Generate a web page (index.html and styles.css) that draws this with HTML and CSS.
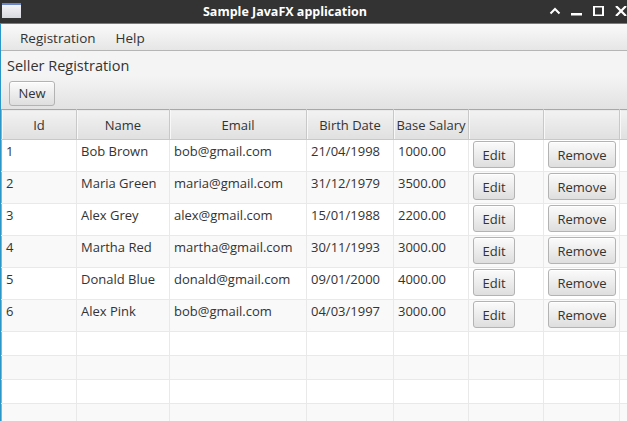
FILE: index.html
```html
<!DOCTYPE html>
<html>
<head>
<meta charset="utf-8">
<link rel="stylesheet" href="styles.css">
</head>
<body>
<div class="titlebar">
  <div class="appicon"></div>
  <div class="title">Sample JavaFX application</div>
  <div class="controls">
    <svg width="12" height="10" viewBox="0 0 12 10"><path d="M1.5 7.5 L6 3 L10.5 7.5" fill="none" stroke="#fff" stroke-width="2"/></svg>
    <svg width="12" height="10" viewBox="0 0 12 10"><rect x="0" y="7" width="11" height="2.5" fill="#fff"/></svg>
    <svg width="12" height="10" viewBox="0 0 12 10"><rect x="1" y="0.5" width="9" height="9" fill="none" stroke="#fff" stroke-width="2"/></svg>
    <svg width="12" height="10" viewBox="0 0 12 10"><path d="M1 0 L11 10 M11 0 L1 10" fill="none" stroke="#fff" stroke-width="2.2"/></svg>
  </div>
</div>
<div class="window">
  <div class="menubar">
    <span class="menu">Registration</span>
    <span class="menu">Help</span>
  </div>
  <div class="heading">Seller Registration</div>
  <div class="toolbar"><button class="btn btn-new">New</button></div>
  <table class="grid">
    <colgroup>
      <col class="c-id"><col class="c-name"><col class="c-email"><col class="c-date"><col class="c-sal"><col class="c-edit"><col class="c-rem"><col class="c-fill">
    </colgroup>
    <thead>
      <tr><th>Id</th><th>Name</th><th>Email</th><th>Birth Date</th><th>Base Salary</th><th></th><th></th><th></th></tr>
    </thead>
    <tbody>
      <tr><td>1</td><td>Bob Brown</td><td>bob@gmail.com</td><td>21/04/1998</td><td>1000.00</td><td class="b"><button class="btn btn-edit">Edit</button></td><td class="b"><button class="btn btn-rem">Remove</button></td><td></td></tr>
      <tr><td>2</td><td>Maria Green</td><td>maria@gmail.com</td><td>31/12/1979</td><td>3500.00</td><td class="b"><button class="btn btn-edit">Edit</button></td><td class="b"><button class="btn btn-rem">Remove</button></td><td></td></tr>
      <tr><td>3</td><td>Alex Grey</td><td>alex@gmail.com</td><td>15/01/1988</td><td>2200.00</td><td class="b"><button class="btn btn-edit">Edit</button></td><td class="b"><button class="btn btn-rem">Remove</button></td><td></td></tr>
      <tr><td>4</td><td>Martha Red</td><td>martha@gmail.com</td><td>30/11/1993</td><td>3000.00</td><td class="b"><button class="btn btn-edit">Edit</button></td><td class="b"><button class="btn btn-rem">Remove</button></td><td></td></tr>
      <tr><td>5</td><td>Donald Blue</td><td>donald@gmail.com</td><td>09/01/2000</td><td>4000.00</td><td class="b"><button class="btn btn-edit">Edit</button></td><td class="b"><button class="btn btn-rem">Remove</button></td><td></td></tr>
      <tr><td>6</td><td>Alex Pink</td><td>bob@gmail.com</td><td>04/03/1997</td><td>3000.00</td><td class="b"><button class="btn btn-edit">Edit</button></td><td class="b"><button class="btn btn-rem">Remove</button></td><td></td></tr>
      <tr class="empty"><td></td><td></td><td></td><td></td><td></td><td></td><td></td><td></td></tr>
      <tr class="empty"><td></td><td></td><td></td><td></td><td></td><td></td><td></td><td></td></tr>
      <tr class="empty"><td></td><td></td><td></td><td></td><td></td><td></td><td></td><td></td></tr>
      <tr class="empty"><td></td><td></td><td></td><td></td><td></td><td></td><td></td><td></td></tr>
    </tbody>
  </table>
</div>
</body>
</html>
```
FILE: styles.css
```css
html, body {
  margin: 0;
  padding: 0;
}
body {
  width: 627px;
  height: 421px;
  overflow: hidden;
  background: #f4f4f4;
  font-family: "Open Sans", "Noto Sans", sans-serif;
  font-size: 13px;
  color: #333333;
}
.titlebar {
  height: 23px;
  background: #333333;
  border-bottom: 1px solid #2b97c9;
  display: flex;
  align-items: center;
  position: relative;
}
.appicon {
  width: 19px;
  height: 13px;
  margin-left: 2px;
  margin-top: -3px;
  background: linear-gradient(#f4f4f6, #d8d8e0);
  border-top: 2px solid #6b86c8;
  box-sizing: content-box;
}
.title {
  flex: 1;
  text-align: center;
  color: #ffffff;
  font-weight: bold;
  font-size: 12.5px;
  margin-left: -18px;
  margin-right: 60px;
}
.controls {
  position: absolute;
  right: 0;
  top: 6px;
  display: flex;
  gap: 10px;
}
.window {
  border-left: 1px solid #2b97c9;
  height: 397px;
  overflow: hidden;
}
.menubar {
  background: linear-gradient(#fafafa, #e6e6e6);
  border-bottom: 1px solid #b5b5b5;
  display: flex;
  align-items: center;
  padding-left: 19px;
  padding-top: 2px;
  box-sizing: border-box;
  height: 27px;
  gap: 20px;
  font-size: 13.5px;
}
.heading {
  height: 25px;
  line-height: 25px;
  padding-left: 6px;
  padding-top: 2px;
  box-sizing: border-box;
  font-size: 14.5px;
  background: #f4f4f4;
}
.toolbar {
  height: 33px;
  background: linear-gradient(#f4f4f4, #e2e2e2);
  display: flex;
  align-items: center;
  padding-left: 8px;
  padding-top: 1px;
  box-sizing: border-box;
}
.btn {
  font-family: "Open Sans", "Noto Sans", sans-serif;
  font-size: 13px;
  color: #333333;
  background: linear-gradient(#fbfbfb, #dedede);
  border: 1px solid #b3b3b3;
  border-radius: 3px;
  box-shadow: inset 0 1px 0 #ffffff;
  padding: 0;
  margin: 0;
}
.btn-new {
  width: 46px;
  height: 25px;
}
.btn-edit {
  width: 42px;
  height: 27px;
}
.btn-rem {
  width: 68px;
  height: 27px;
}
.grid {
  border-collapse: collapse;
  table-layout: fixed;
  width: 632px;
  border-top: 1px solid #a8a8a8;
  border-left: 1px solid #a8a8a8;
}
.c-id { width: 75px; }
.c-name { width: 93px; }
.c-email { width: 137px; }
.c-date { width: 87px; }
.c-sal { width: 75px; }
.c-edit { width: 75px; }
.c-rem { width: 76px; }
.c-fill { width: 14px; }
.grid th {
  height: 29px;
  padding: 0;
  font-weight: normal;
  font-size: 13px;
  background: linear-gradient(#f2f2f2, #e0e0e0);
  border-right: 1px solid #c8c8c8;
  border-bottom: 1px solid #c8c8c8;
  text-align: center;
  vertical-align: middle;
  box-shadow: inset 1px 0 0 #f8f8f8;
}
.grid td {
  height: 32px;
  padding: 0 0 0 4px;
  border-right: 1px solid #e9e9e9;
  border-bottom: 1px solid #e9e9e9;
  vertical-align: top;
  line-height: 23px;
  white-space: nowrap;
  overflow: hidden;
  box-sizing: border-box;
  background: #ffffff;
}
.grid td.b {
  padding-top: 1px;
  line-height: normal;
}
.grid tbody tr:nth-child(even) td {
  background: #f9f9f9;
}
.grid tr.empty td {
  height: 24px;
}
```
